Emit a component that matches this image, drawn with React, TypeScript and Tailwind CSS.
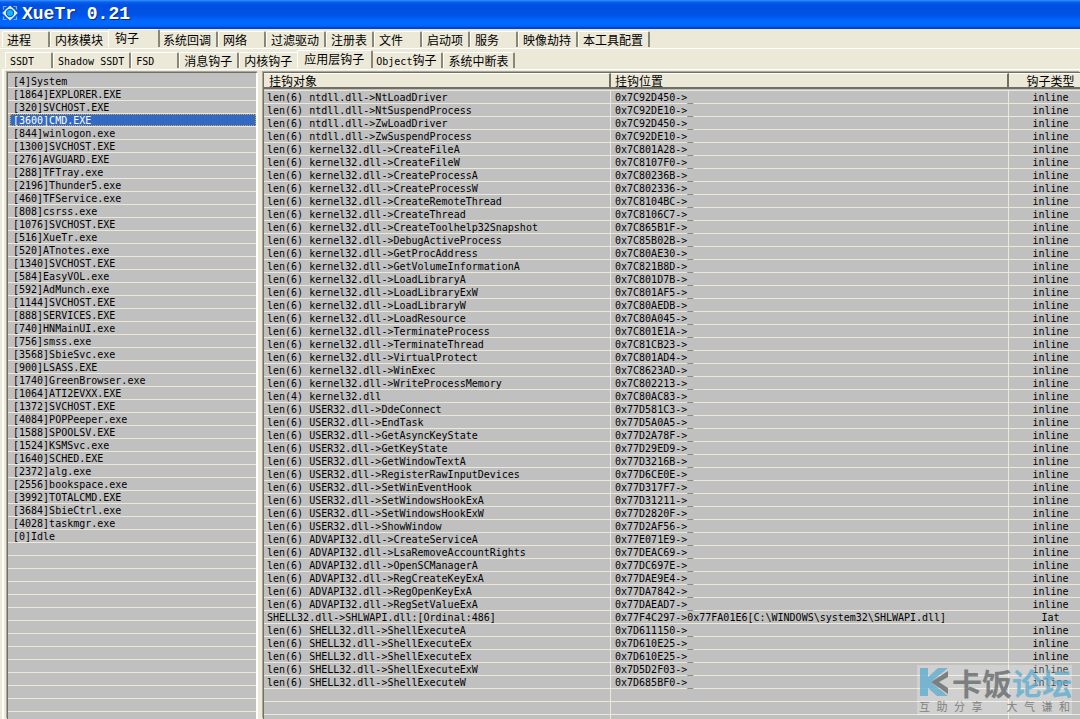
import { useState } from 'react';
import clsx from 'clsx';

const MAIN_TABS = [
  '进程', '内核模块', '钩子', '系统回调', '网络', '过滤驱动',
  '注册表', '文件', '启动项', '服务', '映像劫持', '本工具配置',
];

const HOOK_TABS = [
  'SSDT', 'Shadow SSDT', 'FSD', '消息钩子', '内核钩子', '应用层钩子', 'Object钩子', '系统中断表',
];

const PROCESSES = [
  '[4]System',
  '[1864]EXPLORER.EXE',
  '[320]SVCHOST.EXE',
  '[3600]CMD.EXE',
  '[844]winlogon.exe',
  '[1300]SVCHOST.EXE',
  '[276]AVGUARD.EXE',
  '[288]TFTray.exe',
  '[2196]Thunder5.exe',
  '[460]TFService.exe',
  '[808]csrss.exe',
  '[1076]SVCHOST.EXE',
  '[516]XueTr.exe',
  '[520]ATnotes.exe',
  '[1340]SVCHOST.EXE',
  '[584]EasyVOL.exe',
  '[592]AdMunch.exe',
  '[1144]SVCHOST.EXE',
  '[888]SERVICES.EXE',
  '[740]HNMainUI.exe',
  '[756]smss.exe',
  '[3568]SbieSvc.exe',
  '[900]LSASS.EXE',
  '[1740]GreenBrowser.exe',
  '[1064]ATI2EVXX.EXE',
  '[1372]SVCHOST.EXE',
  '[4084]POPPeeper.exe',
  '[1588]SPOOLSV.EXE',
  '[1524]KSMSvc.exe',
  '[1640]SCHED.EXE',
  '[2372]alg.exe',
  '[2556]bookspace.exe',
  '[3992]TOTALCMD.EXE',
  '[3684]SbieCtrl.exe',
  '[4028]taskmgr.exe',
  '[0]Idle',
];

type Hook = [target: string, location: string, kind: string];

const HOOKS: Hook[] = [
  ['len(6) ntdll.dll->NtLoadDriver', '0x7C92D450->_', 'inline'],
  ['len(6) ntdll.dll->NtSuspendProcess', '0x7C92DE10->_', 'inline'],
  ['len(6) ntdll.dll->ZwLoadDriver', '0x7C92D450->_', 'inline'],
  ['len(6) ntdll.dll->ZwSuspendProcess', '0x7C92DE10->_', 'inline'],
  ['len(6) kernel32.dll->CreateFileA', '0x7C801A28->_', 'inline'],
  ['len(6) kernel32.dll->CreateFileW', '0x7C8107F0->_', 'inline'],
  ['len(6) kernel32.dll->CreateProcessA', '0x7C80236B->_', 'inline'],
  ['len(6) kernel32.dll->CreateProcessW', '0x7C802336->_', 'inline'],
  ['len(6) kernel32.dll->CreateRemoteThread', '0x7C8104BC->_', 'inline'],
  ['len(6) kernel32.dll->CreateThread', '0x7C8106C7->_', 'inline'],
  ['len(6) kernel32.dll->CreateToolhelp32Snapshot', '0x7C865B1F->_', 'inline'],
  ['len(6) kernel32.dll->DebugActiveProcess', '0x7C85B02B->_', 'inline'],
  ['len(6) kernel32.dll->GetProcAddress', '0x7C80AE30->_', 'inline'],
  ['len(6) kernel32.dll->GetVolumeInformationA', '0x7C821B8D->_', 'inline'],
  ['len(6) kernel32.dll->LoadLibraryA', '0x7C801D7B->_', 'inline'],
  ['len(6) kernel32.dll->LoadLibraryExW', '0x7C801AF5->_', 'inline'],
  ['len(6) kernel32.dll->LoadLibraryW', '0x7C80AEDB->_', 'inline'],
  ['len(6) kernel32.dll->LoadResource', '0x7C80A045->_', 'inline'],
  ['len(6) kernel32.dll->TerminateProcess', '0x7C801E1A->_', 'inline'],
  ['len(6) kernel32.dll->TerminateThread', '0x7C81CB23->_', 'inline'],
  ['len(6) kernel32.dll->VirtualProtect', '0x7C801AD4->_', 'inline'],
  ['len(6) kernel32.dll->WinExec', '0x7C8623AD->_', 'inline'],
  ['len(6) kernel32.dll->WriteProcessMemory', '0x7C802213->_', 'inline'],
  ['len(4) kernel32.dll', '0x7C80AC83->_', 'inline'],
  ['len(6) USER32.dll->DdeConnect', '0x77D581C3->_', 'inline'],
  ['len(6) USER32.dll->EndTask', '0x77D5A0A5->_', 'inline'],
  ['len(6) USER32.dll->GetAsyncKeyState', '0x77D2A78F->_', 'inline'],
  ['len(6) USER32.dll->GetKeyState', '0x77D29ED9->_', 'inline'],
  ['len(6) USER32.dll->GetWindowTextA', '0x77D3216B->_', 'inline'],
  ['len(6) USER32.dll->RegisterRawInputDevices', '0x77D6CE0E->_', 'inline'],
  ['len(6) USER32.dll->SetWinEventHook', '0x77D317F7->_', 'inline'],
  ['len(6) USER32.dll->SetWindowsHookExA', '0x77D31211->_', 'inline'],
  ['len(6) USER32.dll->SetWindowsHookExW', '0x77D2820F->_', 'inline'],
  ['len(6) USER32.dll->ShowWindow', '0x77D2AF56->_', 'inline'],
  ['len(6) ADVAPI32.dll->CreateServiceA', '0x77E071E9->_', 'inline'],
  ['len(6) ADVAPI32.dll->LsaRemoveAccountRights', '0x77DEAC69->_', 'inline'],
  ['len(6) ADVAPI32.dll->OpenSCManagerA', '0x77DC697E->_', 'inline'],
  ['len(6) ADVAPI32.dll->RegCreateKeyExA', '0x77DAE9E4->_', 'inline'],
  ['len(6) ADVAPI32.dll->RegOpenKeyExA', '0x77DA7842->_', 'inline'],
  ['len(6) ADVAPI32.dll->RegSetValueExA', '0x77DAEAD7->_', 'inline'],
  ['SHELL32.dll->SHLWAPI.dll:[Ordinal:486]', '0x77F4C297->0x77FA01E6[C:\\WINDOWS\\system32\\SHLWAPI.dll]', 'Iat'],
  ['len(6) SHELL32.dll->ShellExecuteA', '0x7D611150->_', 'inline'],
  ['len(6) SHELL32.dll->ShellExecuteEx', '0x7D610E25->_', 'inline'],
  ['len(6) SHELL32.dll->ShellExecuteEx', '0x7D610E25->_', 'inline'],
  ['len(6) SHELL32.dll->ShellExecuteExW', '0x7D5D2F03->_', 'inline'],
  ['len(6) SHELL32.dll->ShellExecuteW', '0x7D685BF0->_', 'inline'],
];

const MONO = "font-['DejaVu_Sans_Mono','Noto_Sans_CJK_SC',monospace] text-[10px]";
const CJK = "font-['Noto_Sans_CJK_SC',sans-serif] text-[12px]";

// empty rows keep the 13px ruling of the list
const RULED = 'bg-[repeating-linear-gradient(to_bottom,#c0c0c0_0px,#c0c0c0_12px,#ece9d8_12px,#ece9d8_13px)]';

const SUNKEN = 'border-t border-l border-t-[#716f64] border-l-[#716f64] shadow-[-1px_-1px_0_#aca899]';

function Label({ text }: { text: string }) {
  const latin = text.match(/^[\x20-\x7e]*/)?.[0] ?? '';
  return (
    <>
      {latin && <span className={MONO}>{latin}</span>}
      {text.slice(latin.length)}
    </>
  );
}

function TabRow({ tabs, active, onSelect, className }: {
  tabs: string[];
  active: string;
  onSelect: (tab: string) => void;
  className?: string;
}) {
  return (
    <div role="tablist" className={clsx('flex items-end border-b border-white', CJK, className)}>
      {tabs.map(tab => (
        <button
          key={tab}
          role="tab"
          aria-selected={tab === active}
          onClick={() => onSelect(tab)}
          className={clsx(
            'shrink-0 text-left whitespace-nowrap leading-[14px] rounded-t-[2px] border-t border-l border-t-white border-l-white border-r-2 border-r-[#8a8776] bg-[#ece9d8]',
            tab === active ? 'relative -mx-0.5 min-w-[52px] h-[18px] pl-1.5 pr-[7px] pb-0.5' : 'min-w-12 h-4 pl-1 pr-[5px]',
          )}>
          <Label text={tab} />
        </button>
      ))}
    </div>
  );
}

function AppIcon() {
  return (
    <svg viewBox="0 0 16 16" className="size-4 self-start mt-[5px]" aria-hidden="true">
      <path d="M1.5 4.5 V1.5 H4.5 M11.5 1.5 H14.5 V4.5 M14.5 11.5 V14.5 H11.5 M4.5 14.5 H1.5 V11.5" fill="none" stroke="#6cb4f8" strokeWidth="1.2" />
      <path d="M8 1.5 L14.8 8 L8 14.5 L1.2 8 Z" fill="#d4eeff" stroke="#d4eeff" strokeWidth="1.6" strokeLinejoin="round" />
      <circle cx="8" cy="8" r="5.4" fill="#e2f5ff" />
      <circle cx="8" cy="8" r="3.6" fill="#18b0f4" stroke="#0c62d4" strokeWidth="1.2" />
    </svg>
  );
}

function Watermark() {
  return (
    <div className="pointer-events-none absolute right-2 bottom-1 w-[155px] h-[50px] bg-white/25 font-['Noto_Sans_CJK_SC',sans-serif]">
      <div className="flex items-center gap-1 h-[34px] pl-[3px] opacity-80">
        <svg viewBox="0 0 28 28" className="size-7 shrink-0" aria-hidden="true">
          <path d="M0 0 H8 V9 L18 0 H28 L11 14 L28 28 H17 L8 20 V28 H0 Z" fill="#62aed0" />
          <path d="M28 3 L11 14 L28 26 V20 L19 14 L28 9 Z" fill="#686c6d" />
        </svg>
        <p className="text-[30px] leading-[34px] font-bold whitespace-nowrap text-[#686c6d]">
          卡饭<span className="text-[#62aed0]">论坛</span>
        </p>
      </div>
      <p className="flex justify-between px-0.5 text-[11px] leading-[14px] text-[#808282]">
        {[...'互助分享　大气谦和'].map((ch, i) => <span key={i}>{ch}</span>)}
      </p>
    </div>
  );
}

export default function App() {
  const [mainTab, setMainTab] = useState('钩子');
  const [hookTab, setHookTab] = useState('应用层钩子');
  const [selected, setSelected] = useState('[3600]CMD.EXE');

  return (
    <main className="relative flex h-screen flex-col overflow-hidden bg-[#ece9d8] text-black">

      {/* Title bar */}
      <header className="flex h-[29px] shrink-0 items-center gap-1 pl-0.5 bg-[linear-gradient(to_bottom,#3c94ff_0px,#0660f0_2px,#0050e0_5px,#0052e6_15px,#0068ff_21px,#0066fc_26px,#0040c8_28px,#0040c8_29px)]">
        <AppIcon />
        <h1 className="font-['Liberation_Mono',monospace] text-[18px] font-bold text-white [text-shadow:1px_1px_0_#0a2a80]">
          XueTr 0.21
        </h1>
      </header>

      {/* Tabs */}
      <TabRow tabs={MAIN_TABS} active={mainTab} onSelect={setMainTab} className="h-5 shrink-0 pl-0.5 pb-px" />
      <TabRow tabs={HOOK_TABS} active={hookTab} onSelect={setHookTab} className="h-[21px] shrink-0 ml-0.5 pl-[3px] pb-px" />

      <div className="flex min-h-0 flex-1 gap-[5px] border-l-2 border-white ml-0.5 pl-[3px] pt-0.5">

        {/* Process list */}
        <section className={clsx('flex w-[251px] shrink-0 flex-col border-r-2 border-r-white bg-[#c0c0c0] pt-0.5', SUNKEN)}>
          <ul className={clsx('shrink-0', MONO)}>
            {PROCESSES.map(p => (
              <li key={p} className="border-b border-[#ece9d8] pl-0.5">
                <button
                  onClick={() => setSelected(p)}
                  className={clsx(
                    'block h-3 w-full pl-[3px] text-left leading-[14px] whitespace-nowrap',
                    p === selected && 'bg-[#316ac5] text-white outline-1 outline-dotted -outline-offset-1 outline-[#e0a040]',
                  )}>
                  {p}
                </button>
              </li>
            ))}
          </ul>
          <div className={clsx('flex-1', RULED)} />
        </section>

        {/* Hook table */}
        <section className={clsx('min-w-0 flex-1 overflow-hidden bg-[#c0c0c0]', SUNKEN)}>
          <table className={clsx('h-full w-full table-fixed border-separate border-spacing-0', MONO)}>
            <colgroup>
              <col className="w-[347px]" />
              <col />
              <col className="w-[71px]" />
            </colgroup>
            <thead className={CJK}>
              <tr className="h-[18px]">
                {['挂钩对象', '挂钩位置', '钩子类型'].map((h, i) => (
                  <th key={h} className="h-[18px] border-b border-[#ece9d8] p-0 pb-px font-normal">
                    <div className={clsx(
                      'h-4 border-t border-t-white border-b-2 border-b-[#716f64] bg-[#ece9d8] leading-[13px]',
                      i === 2 ? 'pl-3 text-center' : 'border-r-2 border-r-[#716f64] text-left',
                      i === 0 && 'pl-[5px]',
                      i === 1 && 'pl-1',
                    )}>
                      {h}
                    </div>
                  </th>
                ))}
              </tr>
            </thead>
            <tbody>
              {HOOKS.map(([target, location, kind], i) => (
                <tr key={i} className="h-[13px] whitespace-nowrap">
                  <td className="h-[13px] border-r border-b border-[#ece9d8] p-0 pl-[3px]"><div className="h-3 leading-[14px]">{target}</div></td>
                  <td className="h-[13px] border-r border-b border-[#ece9d8] p-0 pl-1"><div className="h-3 leading-[14px]">{location}</div></td>
                  <td className="h-[13px] border-b border-[#ece9d8] p-0 pl-3 text-center"><div className="h-3 leading-[14px]">{kind}</div></td>
                </tr>
              ))}
              <tr>
                <td className={clsx('border-r border-[#ece9d8] p-0', RULED)} />
                <td className={clsx('border-r border-[#ece9d8] p-0', RULED)} />
                <td className={clsx('p-0', RULED)} />
              </tr>
            </tbody>
          </table>
        </section>
      </div>

      <Watermark />
    </main>
  );
}
